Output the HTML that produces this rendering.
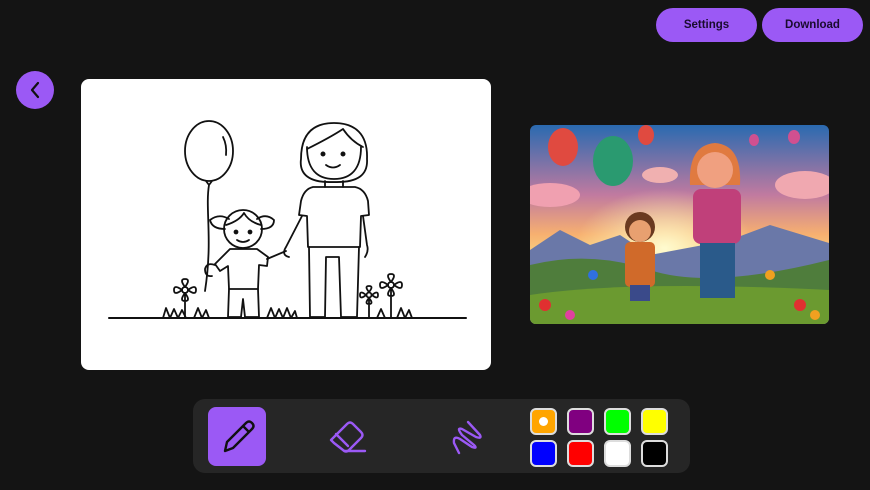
<!DOCTYPE html>
<html><head><meta charset="utf-8"><style>
*{margin:0;padding:0;box-sizing:border-box}
body{width:870px;height:490px;background:#141414;position:relative;overflow:hidden;font-family:"Liberation Sans",sans-serif}
.btn{position:absolute;top:8px;height:34px;width:101px;border-radius:17px;background:#9b59f5;color:#1a0b2e;font-weight:bold;font-size:11.5px;display:flex;align-items:center;justify-content:center}
.back{position:absolute;left:16px;top:71px;width:38px;height:38px;border-radius:50%;background:#9b59f5}
.canvas{position:absolute;left:81px;top:79px;width:410px;height:291px;background:#fff;border-radius:8px}
.img{position:absolute;left:530px;top:125px;width:299px;height:199px;border-radius:6px;overflow:hidden}
.bar{position:absolute;left:193px;top:399px;width:497px;height:74px;background:#262626;border-radius:12px}
.sel{position:absolute;left:208px;top:407px;width:58px;height:59px;background:#9b59f5;border-radius:8px}
.sw{position:absolute;width:27px;height:27px;border:2px solid #ddd;border-radius:6px}
</style></head><body>
<div class="btn" style="left:656px">Settings</div>
<div class="btn" style="left:762px">Download</div>
<div class="back"><svg width="38" height="38"><path d="M22 12 L16 19 L22 26" fill="none" stroke="#111" stroke-width="2.2" stroke-linecap="round" stroke-linejoin="round"/></svg></div>
<div class="canvas">
<svg width="410" height="291" fill="none" stroke="#111" stroke-width="1.8" stroke-linecap="round" stroke-linejoin="round">
<ellipse cx="128" cy="72" rx="24" ry="30"/>
<path d="M142 58 Q146 66 145 76"/>
<path d="M125 102 L128 106 L131 102 M128 106 C124 130 132 160 124 212"/>
<path d="M28 239 H385" stroke-width="2"/>
<!-- woman -->
<path d="M252 103 C228 104 218 95 220 80 C220 55 232 44 253 44 C274 44 287 55 286 80 C287 95 278 104 252 103Z"/>
<path d="M226 70 Q250 58 262 50 Q270 62 282 68"/>
<path d="M226 68 C226 90 236 100 253 100 C270 100 280 90 280 68"/>
<circle cx="242" cy="75" r="1.6" fill="#111"/><circle cx="262" cy="75" r="1.6" fill="#111"/>
<path d="M245 86 Q252 91 259 86"/>
<path d="M244 102 V108 M262 102 V108"/>
<path d="M232 108 H274 Q284 110 287 122 L288 136 L280 137 L279 168 H227 L226 137 L218 136 L220 122 Q223 110 232 108Z"/>
<path d="M221 137 L205 168 Q200 176 208 178 M282 137 L286 166 Q288 172 284 178"/>
<path d="M228 168 L229 238 H244 L245 178 H258 L260 238 H276 L278 168"/>
<!-- girl -->
<path d="M144 150 Q131 150 129 141 Q138 134 148 140 M180 150 Q193 150 193 141 Q185 134 176 140"/>
<circle cx="162" cy="150" r="19"/>
<path d="M145 146 Q158 142 163 134 Q168 143 180 146"/>
<circle cx="155" cy="153" r="1.5" fill="#111"/><circle cx="169" cy="153" r="1.5" fill="#111"/>
<path d="M156 161 Q162 165 168 161"/>
<path d="M149 170 H176 L187 178 L186 187 L178 186 L177 210 H148 L147 187 L139 192 L134 185Z"/>
<path d="M186 180 L205 172"/>
<path d="M148 210 L147 238 H160 L162 220 L164 238 H178 L177 210"/>
<path d="M134 186 Q126 183 124 190 Q124 198 131 197"/>
<!-- flowers -->
<circle cx="104" cy="211" r="3"/><path d="M104 208 Q98 200 104 200 Q110 200 104 208 M107 211 Q115 205 115 211 Q115 217 107 211 M104 214 Q110 222 104 222 Q98 222 104 214 M101 211 Q93 217 93 211 Q93 205 101 211 M104 216 V238"/>
<circle cx="310" cy="206" r="3"/><path d="M310 203 Q304 195 310 195 Q316 195 310 203 M313 206 Q321 200 321 206 Q321 212 313 206 M310 209 Q316 217 310 217 Q304 217 310 209 M307 206 Q299 212 299 206 Q299 200 307 206 M310 211 V238"/>
<circle cx="288" cy="216" r="2.5"/><path d="M288 213 Q283 207 288 207 Q293 207 288 213 M291 216 Q297 211 297 216 Q297 221 291 216 M288 219 Q293 225 288 225 Q283 225 288 219 M285 216 Q279 221 279 216 Q279 211 285 216 M288 221 V238"/>
<path d="M82 239 L85 229 L89 239 L93 230 L97 239 L101 231 L105 239 M113 239 L117 229 L121 239 L125 231 L128 239 M186 239 L190 229 L194 239 L198 230 L202 239 L206 229 L210 239 L214 232 L216 239 M296 239 L300 230 L304 239 M316 239 L320 229 L324 239 L328 231 L331 239"/>
</svg>
</div>
<div class="img"><svg width="299" height="199">
<defs><linearGradient id="s" x1="0" y1="0" x2="0" y2="1"><stop offset="0" stop-color="#2a6ab0"/><stop offset="0.35" stop-color="#c07aa0"/><stop offset="0.55" stop-color="#f7b070"/><stop offset="0.65" stop-color="#f7d080"/><stop offset="1" stop-color="#f7d080"/></linearGradient>
<radialGradient id="sun" cx="0.45" cy="0.62" r="0.3"><stop offset="0" stop-color="#fffbd0"/><stop offset="1" stop-color="#fff6b0" stop-opacity="0"/></radialGradient></defs>
<rect width="299" height="199" fill="url(#s)"/>
<rect width="299" height="199" fill="url(#sun)"/>
<ellipse cx="20" cy="70" rx="30" ry="12" fill="#f0a0b0"/>
<ellipse cx="275" cy="60" rx="30" ry="14" fill="#f0a8b0"/>
<ellipse cx="130" cy="50" rx="18" ry="8" fill="#f0b0b0"/>
<path d="M0 125 L30 105 L60 120 L90 110 L120 130 L200 115 L240 100 L299 118 V199 H0Z" fill="#6a78a8"/>
<path d="M0 140 Q60 125 120 145 T299 135 V199 H0Z" fill="#4f7d3c"/>
<path d="M0 170 Q100 155 299 165 V199 H0Z" fill="#6b9a30"/>
<circle cx="15" cy="180" r="6" fill="#e03030"/><circle cx="40" cy="190" r="5" fill="#e040a0"/><circle cx="270" cy="180" r="6" fill="#e03030"/><circle cx="285" cy="190" r="5" fill="#f0a020"/><circle cx="240" cy="150" r="5" fill="#f0a020"/><circle cx="63" cy="150" r="5" fill="#3070e0"/>
<ellipse cx="33" cy="22" rx="15" ry="19" fill="#e04a40"/>
<ellipse cx="83" cy="36" rx="20" ry="25" fill="#2a9a70"/>
<ellipse cx="116" cy="10" rx="8" ry="10" fill="#e04a40"/>
<ellipse cx="264" cy="12" rx="6" ry="7" fill="#d05090"/>
<ellipse cx="224" cy="15" rx="5" ry="6" fill="#d05090"/>
<path d="M160 60 Q158 20 185 18 Q212 20 210 60Z" fill="#e07a40"/>
<circle cx="185" cy="45" r="18" fill="#f0a080"/>
<rect x="163" y="64" width="48" height="55" rx="8" fill="#c0407a"/>
<rect x="170" y="118" width="35" height="55" fill="#2a5a8a"/>
<circle cx="110" cy="102" r="15" fill="#6a3a20"/>
<circle cx="110" cy="106" r="11" fill="#e8a070"/>
<rect x="95" y="117" width="30" height="45" rx="5" fill="#d06a2a"/>
<rect x="100" y="160" width="20" height="16" fill="#3a4a8a"/>
</svg></div>
<div class="bar"></div>
<div class="sel"><svg width="58" height="59" fill="none" stroke="#111" stroke-width="2.4" stroke-linejoin="round"><path d="M17 44 L19 35 L38 16 Q41 13 44 16 Q47 19 44 22 L25 41Z M35 19 L41 25"/></svg></div>
<svg style="position:absolute;left:325px;top:415px" width="45" height="45" fill="none" stroke="#9b59f5" stroke-width="2.4" stroke-linejoin="round" stroke-linecap="round"><path d="M6 25 L22 9 Q25 6 28 9 L36 17 Q39 20 36 23 L24 35 Q21 38 18 35 L9 28 Q6 25 6 25Z M11 19 L23 31 M20 36 H40"/></svg>
<svg style="position:absolute;left:448px;top:415px" width="40" height="45" fill="none" stroke="#9b59f5" stroke-width="2.4" stroke-linecap="round" stroke-linejoin="round"><path d="M20 7 L32 20 Q34 24 28 22 L14 14 Q8 12 14 20 L26 30 Q30 34 24 32 L12 24 Q5 20 6 28 L11 38"/></svg>
<div class="sw" style="left:530px;top:408px;background:#ffa500"><div style="width:9px;height:9px;border-radius:50%;background:#fff;margin:7px"></div></div>
<div class="sw" style="left:567px;top:408px;background:#800080"></div>
<div class="sw" style="left:604px;top:408px;background:#00ff00"></div>
<div class="sw" style="left:641px;top:408px;background:#ffff00"></div>
<div class="sw" style="left:530px;top:440px;background:#0000ff"></div>
<div class="sw" style="left:567px;top:440px;background:#ff0000"></div>
<div class="sw" style="left:604px;top:440px;background:#fff"></div>
<div class="sw" style="left:641px;top:440px;background:#000"></div>
</body></html>
